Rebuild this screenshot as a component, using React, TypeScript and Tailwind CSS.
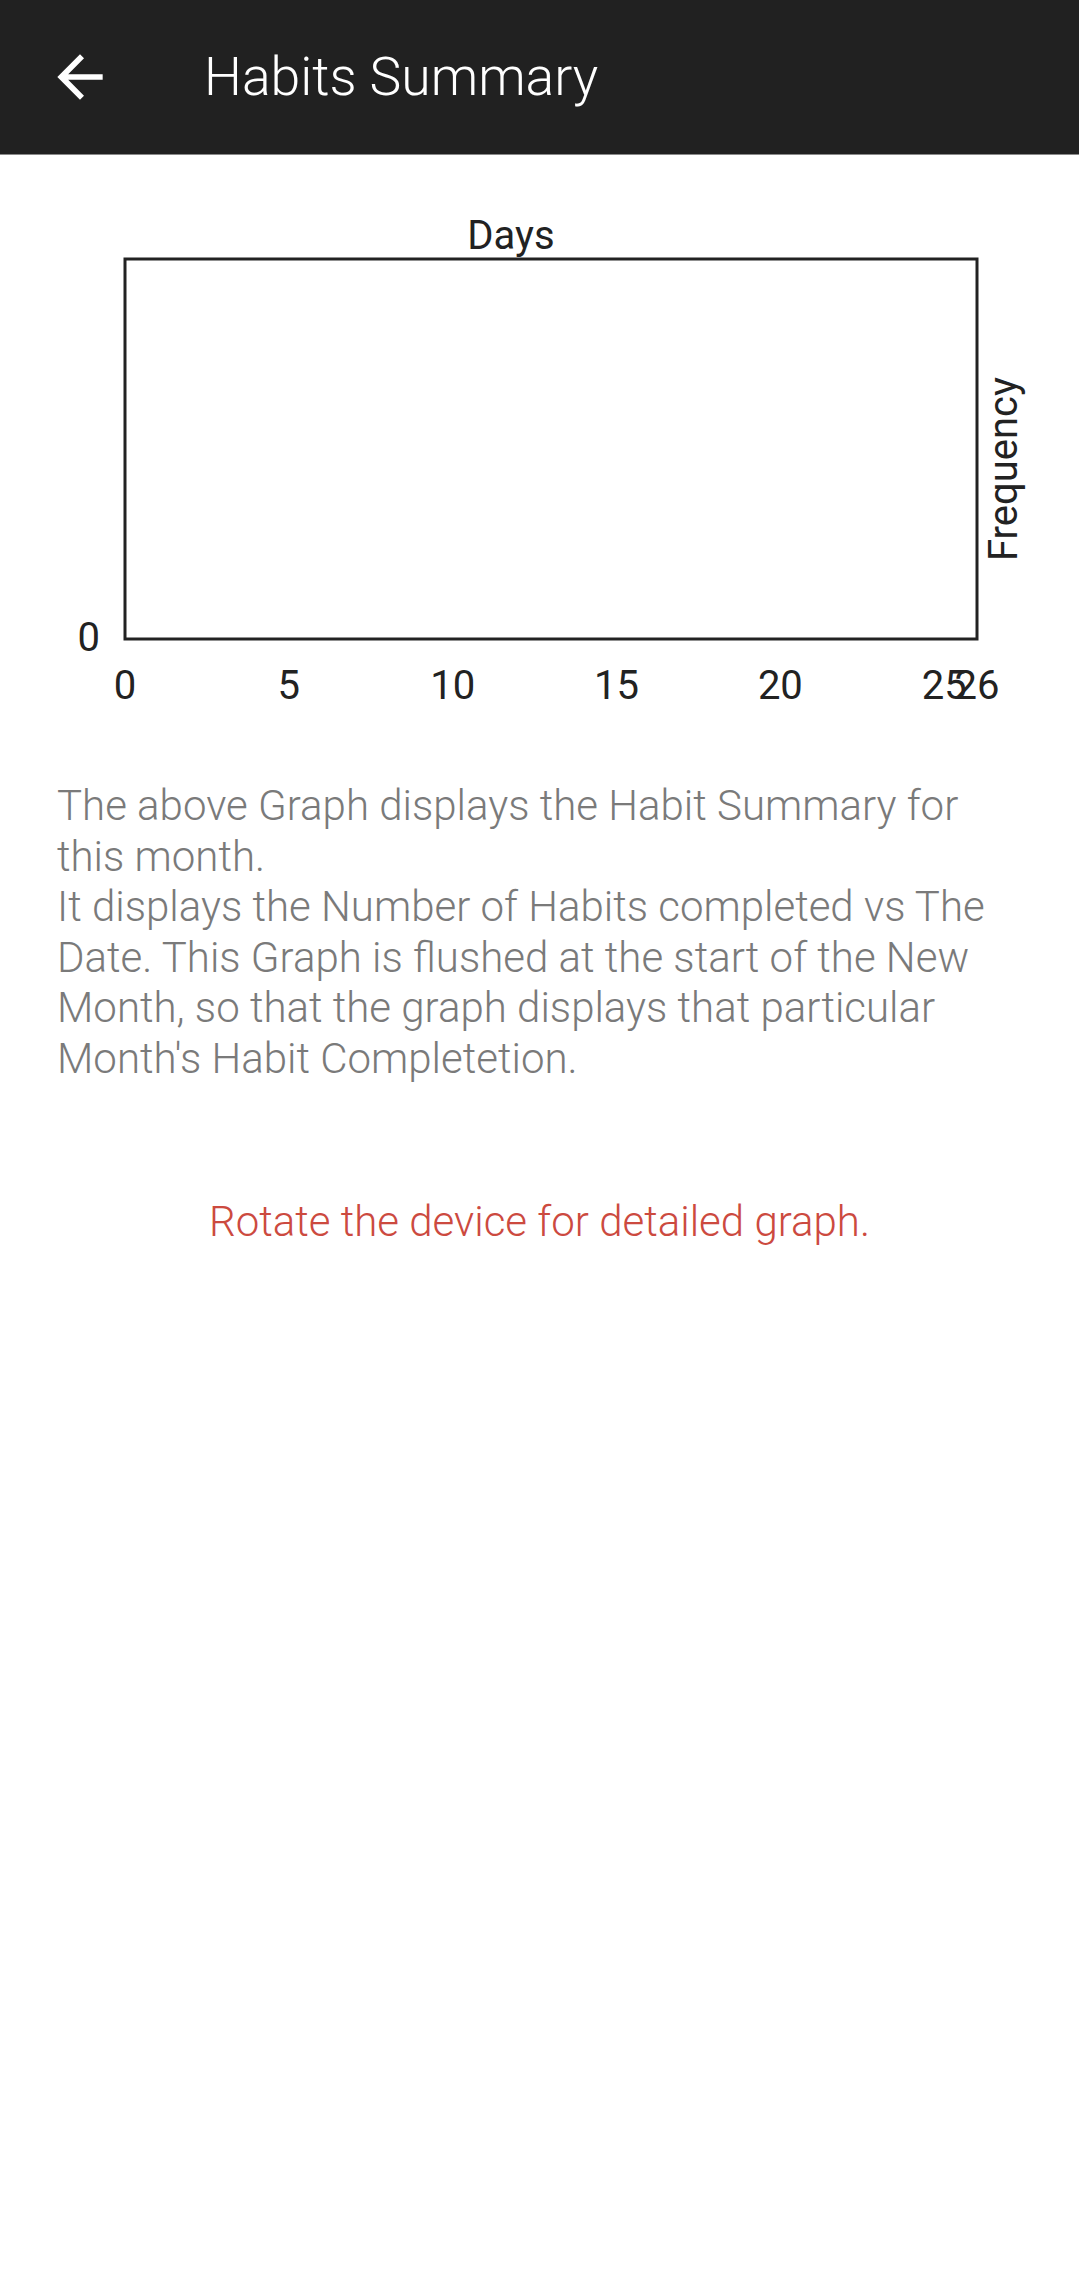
const ticks = [0, 5, 10, 15, 20, 25, 26];

function BackArrow() {
  return (
    <svg width="68" height="68" viewBox="0 0 24 24" fill="white">
      <path d="M20 11H7.83l5.59-5.59L12 4l-8 8 8 8 1.41-1.41L7.83 13H20v-2z" />
    </svg>
  );
}

function Chart() {
  // plot box spans day 0..26 horizontally
  const left = 125;
  const right = 977;
  const x = (d: number) => left + ((right - left) * d) / 26;
  return (
    <svg width="1079" height="600" viewBox="0 0 1079 600" className="block">
      <g fontFamily="Roboto, 'Noto Sans', sans-serif" fill="#222222" fontSize="40">
        <text x="511" y="94" textAnchor="middle">
          Days
        </text>
        <rect x={left} y="104" width={right - left} height="380" fill="none" stroke="#222222" strokeWidth="3" />
        <text x="100" y="496" textAnchor="end">
          0
        </text>
        {ticks.map((t) => (
          <text key={t} x={x(t)} y="544" textAnchor="middle">
            {t}
          </text>
        ))}
        <text x="1017" y="314" textAnchor="middle" transform="rotate(-90 1017 314)">
          Frequency
        </text>
      </g>
    </svg>
  );
}

export default function App() {
  return (
    <div className="w-[1079px] min-h-[2284px] bg-white font-['Roboto','Noto_Sans',sans-serif]">
      {/* toolbar */}
      <header className="h-[155px] bg-[#212121] flex items-center border-b border-[#8a8a8a]">
        <div className="w-[204px] pl-[46px] flex items-center">
          <BackArrow />
        </div>
        <h1 className="text-white text-[53.5px] font-light leading-none">Habits Summary</h1>
      </header>

      <Chart />

      <div className="px-[57px] mt-[26px]">
        <p className="text-[#7a7a7a] text-[42px] leading-[50.5px] font-light">
          The above Graph displays the Habit Summary for this month.
          <br />
          It displays the Number of Habits completed vs The Date. This Graph is flushed at the start of the New
          Month, so that the graph displays that particular Month's Habit Completetion.
        </p>
        <p className="mt-[113px] text-center text-[#cc4a3f] text-[42px] leading-[50px] font-light">
          Rotate the device for detailed graph.
        </p>
      </div>
    </div>
  );
}
